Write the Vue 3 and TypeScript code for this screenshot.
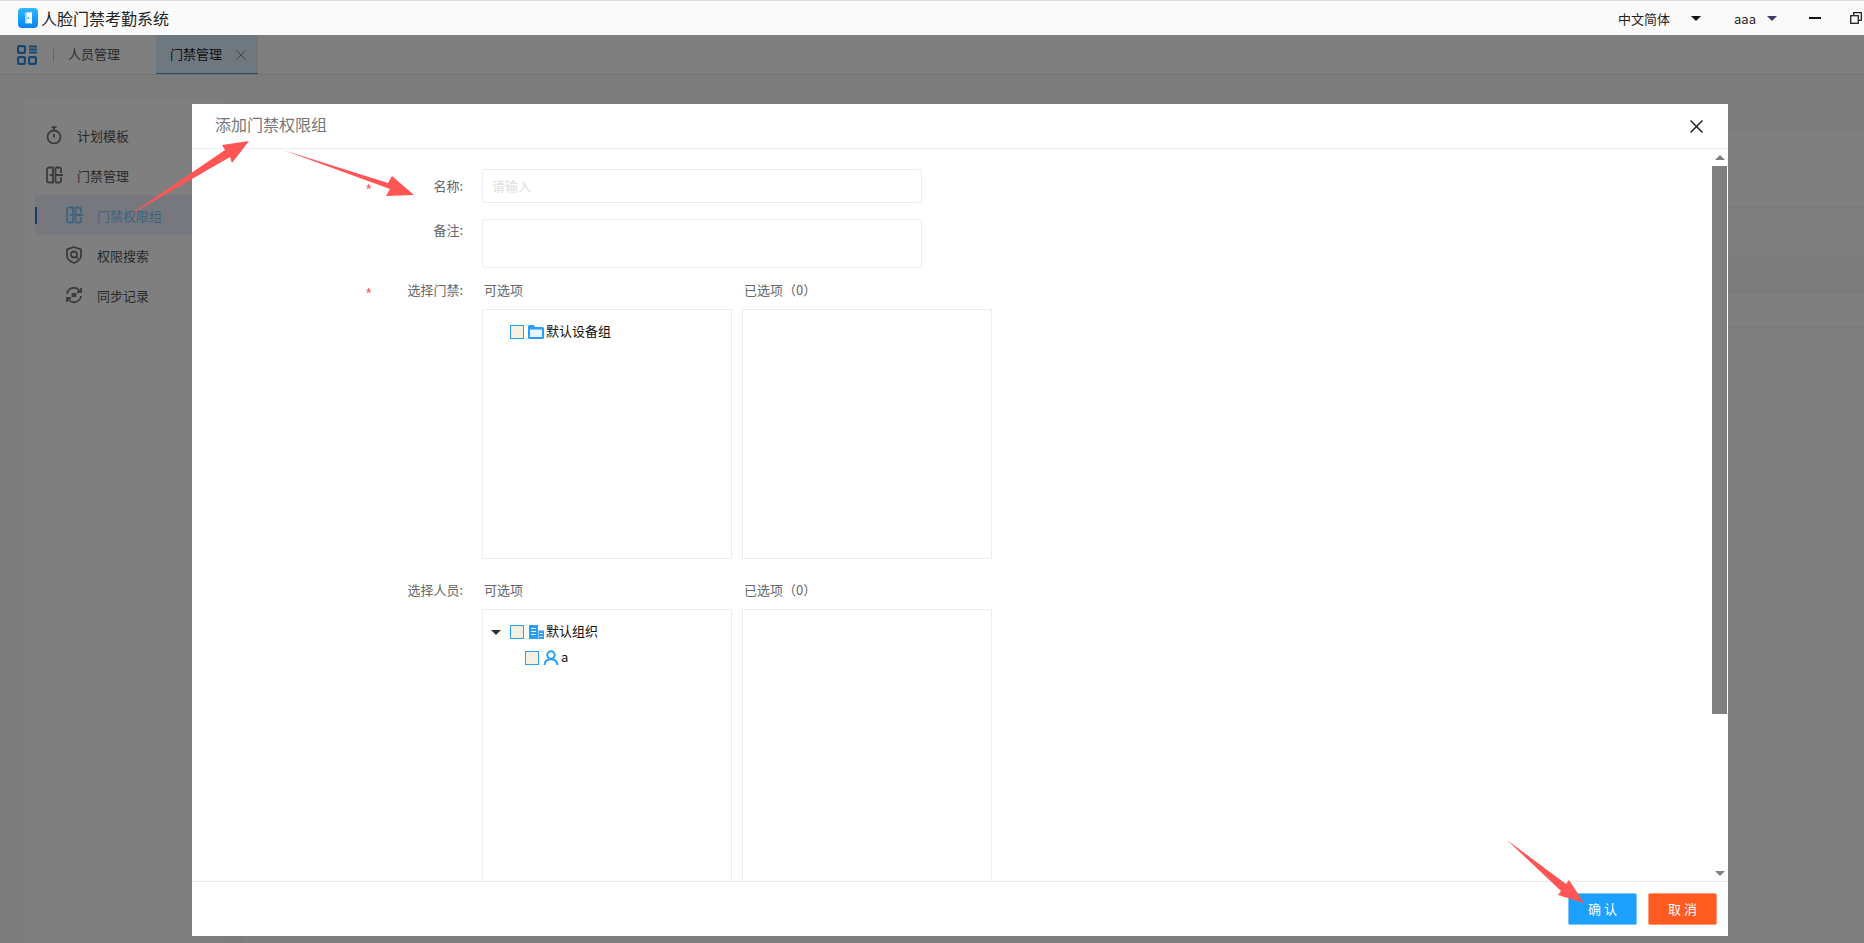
<template>
  <div class="app">
    <header class="titlebar">
      <div class="brand">
        <span class="logo">
          <svg width="20" height="20" viewBox="0 0 20 20">
            <defs>
              <linearGradient id="logo-bg" x1="0" y1="0" x2="0" y2="1">
                <stop offset="0" stop-color="#2fb8ff" />
                <stop offset="1" stop-color="#0a84f5" />
              </linearGradient>
            </defs>
            <rect width="20" height="20" rx="4" fill="url(#logo-bg)" />
            <path d="M7 4.500h7v11H7z" fill="#a9dcff" />
            <path d="M9 4.500l5 0v11l-5-1z" fill="#fff" />
            <circle cx="10.500" cy="10" r=".9" fill="#2fa4f8" />
          </svg>
        </span>
        <span class="app-name">人脸门禁考勤系统</span>
      </div>
      <div class="win-tools">
        <span class="lang">中文简体</span>
        <i class="caret"></i>
        <span class="user">aaa</span>
        <i class="caret navy"></i>
        <span class="minimize"></span>
        <svg class="restore" width="12" height="12" viewBox="0 0 12 12" fill="none" stroke="#222" stroke-width="1.300">
          <rect x=".7" y="3.700" width="7.600" height="7.600" />
          <path d="M3.700 3.500V.7h7.600v7.600H8.500" />
        </svg>
      </div>
    </header>

    <div class="page">
      <nav class="tabs">
        <svg class="grid-icon" width="20" height="20" viewBox="0 0 20 20" fill="none" stroke="#2a8fe0" stroke-width="2.200">
          <rect x="1.100" y="1.100" width="6.800" height="6.800" rx="1" />
          <path d="M12 1.500h8M12 4.500h8M12 7.500h8" />
          <rect x="1.100" y="12.100" width="6.800" height="6.800" rx="1" />
          <rect x="12.100" y="12.100" width="6.800" height="6.800" rx="1" />
        </svg>
        <span class="tab-sep"></span>
        <span class="tab">人员管理</span>
        <span class="tab active">
          门禁管理
          <svg class="tab-close" width="10" height="10" viewBox="0 0 10 10" stroke="#888" stroke-width="1">
            <path d="M.5.500l9 9M9.500.500l-9 9" />
          </svg>
        </span>
      </nav>

      <div class="workspace">
        <aside class="side">
          <div v-for="item in menu" :key="item.label" class="menu-row" :class="{ sub: item.sub, current: item.current }">
            <svg class="menu-icon" width="18" height="18" viewBox="0 0 18 18" fill="none" stroke="currentColor" stroke-width="1.800">
              <path v-for="d in item.icon" :key="d" :d="d" />
            </svg>
            <span class="menu-text">{{ item.label }}</span>
          </div>
        </aside>
        <section class="main-bg">
          <div class="bg-head"></div>
          <div class="bg-tools"></div>
          <div class="bg-thead"></div>
          <div class="bg-row"></div>
        </section>
      </div>
    </div>

    <div class="mask">
      <div class="dialog">
        <div class="dialog-head">
          <span class="dialog-title">添加门禁权限组</span>
          <svg class="dialog-close" width="13" height="13" viewBox="0 0 13 13" stroke="#222" stroke-width="1.500">
            <path d="M.5.500l12 12M12.500.500l-12 12" />
          </svg>
        </div>

        <div class="dialog-body">
          <div class="form">
            <div class="field name-field">
              <label class="label required">名称:</label>
              <div class="fake-input"><span class="placeholder">请输入</span></div>
            </div>
            <div class="field note-field">
              <label class="label">备注:</label>
              <div class="fake-textarea"></div>
            </div>
            <div class="field transfer-field">
              <label class="label required">选择门禁:</label>
              <div class="transfer">
                <div class="pane">
                  <div class="pane-title">可选项</div>
                  <div class="pane-box tree">
                    <div class="node">
                      <span class="node-arrow"></span>
                      <i class="check"></i>
                      <svg class="node-icon" width="16" height="16" viewBox="0 0 16 16">
                        <path d="M0 2.500A1.500 1.500 0 0 1 1.500 1h4.300l1.500 2h7.200A1.500 1.500 0 0 1 16 4.500v9a1.500 1.500 0 0 1-1.500 1.500h-13A1.500 1.500 0 0 1 0 13.500z" fill="#2a9df4" />
                        <rect x="2" y="5.500" width="12" height="7.500" fill="#eaf4fd" />
                      </svg>
                      <span>默认设备组</span>
                    </div>
                  </div>
                </div>
                <div class="pane">
                  <div class="pane-title">已选项（0）</div>
                  <div class="pane-box"></div>
                </div>
              </div>
            </div>
            <div class="field transfer-field last">
              <label class="label">选择人员:</label>
              <div class="transfer">
                <div class="pane">
                  <div class="pane-title">可选项</div>
                  <div class="pane-box tree tall">
                    <div class="node">
                      <span class="node-arrow open"></span>
                      <i class="check"></i>
                      <svg class="node-icon" width="16" height="16" viewBox="0 0 16 16">
                        <path d="M1 1h9v14H1z" fill="#2a9df4" />
                        <path d="M10.500 6.500H16V15h-5.500z" fill="#2a9df4" />
                        <path d="M3 4.500h5M3 7.500h5M3 10.500h5M12 9.500h2.500M12 12.500h2.500" stroke="#e4f2fd" stroke-width="1.200" />
                      </svg>
                      <span>默认组织</span>
                    </div>
                    <div class="node child">
                      <i class="check"></i>
                      <svg class="node-icon" width="16" height="16" viewBox="0 0 16 16" fill="none" stroke="#2a9df4" stroke-width="2">
                        <circle cx="8" cy="5" r="3.700" />
                        <path d="M1.500 15c.3-3.800 3-5.800 6.500-5.800s6.200 2 6.500 5.800" />
                      </svg>
                      <span>a</span>
                    </div>
                  </div>
                </div>
                <div class="pane">
                  <div class="pane-title">已选项（0）</div>
                  <div class="pane-box tall"></div>
                </div>
              </div>
            </div>
          </div>
          <div class="scrollbar">
            <i class="sb-up"></i>
            <div class="sb-track"><div class="sb-thumb"></div></div>
            <i class="sb-down"></i>
          </div>
        </div>

        <div class="dialog-foot">
          <button class="btn primary">确 认</button>
          <button class="btn danger">取 消</button>
        </div>
      </div>
    </div>

    <svg class="marks" width="1864" height="943" viewBox="0 0 1864 943">
      <polygon v-for="p in arrows" :key="p" :points="p" fill="#ff5555" />
    </svg>
  </div>
</template>

<script setup lang="ts">
interface MenuItem {
  label: string;
  icon: string[];
  sub?: boolean;
  current?: boolean;
}

const doorIcon = [
  'M8 1.500H4a2 2 0 0 0-2 2v11a2 2 0 0 0 2 2h4z',
  'M10.500 1.500H14a2 2 0 0 1 2 2v3.500M10.500 16.500H14a2 2 0 0 0 2-2V11M10.500 1.500v15M10.500 9H18',
  'M4.500 9H8',
];

const menu: MenuItem[] = [
  {
    label: '计划模板',
    icon: ['M9 4.500a6.500 6.500 0 1 0 0 13 6.500 6.500 0 0 0 0-13z', 'M6.500 1.200h5M9 1.500v3M9 8v3.500'],
  },
  { label: '门禁管理', icon: doorIcon },
  { label: '门禁权限组', icon: doorIcon, sub: true, current: true },
  {
    label: '权限搜索',
    icon: [
      'M9 1l7 2.500v6c0 3.500-3 6-7 7.500-4-1.500-7-4-7-7.500v-6z',
      'M9 5.500a3 3 0 1 0 0 6 3 3 0 0 0 0-6zM11.200 10.800l2 2',
    ],
    sub: true,
  },
  {
    label: '同步记录',
    icon: [
      'M2 8a7 7 0 0 1 12-4l2 2M16 10a7 7 0 0 1-12 4l-2-2',
      'M16 2v4h-4M2 16v-4h4',
      'M7.500 8h3v2h-3z',
    ],
    sub: true,
  },
];

const arrows = [
  '128,216 225,150 222,145 249,141 232,163 230,157',
  '283,150 388,183 392,176 414,195 386,196 390,189',
  '1507,840 1566,884 1569,880 1584,903 1558,895 1561,891',
];
</script>

<style>
html,
body {
  margin: 0;
  height: 100%;
  overflow: hidden;
}
</style>

<style scoped>
.app {
  position: relative;
  width: 1864px;
  height: 943px;
  overflow: hidden;
  font-family: "Noto Sans CJK SC", "Noto Sans", sans-serif;
  font-size: 13px;
  color: #333;
  background: #f8f8f8;
}

.titlebar {
  position: relative;
  z-index: 5;
  height: 34px;
  border-top: 1px solid #ddd;
  display: flex;
  align-items: center;
  justify-content: space-between;
  background: #fafafa;
}
.brand { display: flex; align-items: center; padding-left: 18px; }
.logo { display: flex; margin-right: 3px; }
.app-name { font-size: 16px; color: #222; }
.win-tools { display: flex; align-items: center; color: #222; font-size: 13px; }
.lang { margin-right: 21px; }
.caret {
  width: 0;
  height: 0;
  border-left: 5px solid transparent;
  border-right: 5px solid transparent;
  border-top: 5px solid #111;
}
.caret.navy { border-top-color: #3c3c6e; }
.user { margin: 0 11px 0 33px; }
.minimize { width: 12px; height: 2px; background: #111; margin: 0 29px 0 32px; }
.restore { margin-right: 2px; }

.page { height: 908px; display: flex; flex-direction: column; }
.tabs {
  height: 39px;
  flex: none;
  box-sizing: content-box;
  display: flex;
  align-items: center;
  background: #fff;
  border-bottom: 1px solid #e4e4e4;
  padding-left: 17px;
}
.tab-sep { width: 1px; height: 14px; background: #ccc; margin: 0 14px 0 16px; }
.tab { color: #555; padding-bottom: 2px; }
.tab.active {
  margin-left: 36px;
  height: 39px;
  width: 102px;
  padding: 0 0 2px 14px;
  display: flex;
  align-items: center;
  color: #222;
  background: #e0f0ff;
  border-bottom: 1px solid #3f9fe0;
  box-sizing: border-box;
}
.tab-close { margin-left: 14px; margin-top: 3px; }

.workspace { flex: 1; display: flex; padding: 23px 0 0 25px; min-height: 0; }
.side { width: 200px; flex: none; background: #fff; padding-top: 17px; }
.menu-row {
  position: relative;
  height: 40px;
  display: flex;
  align-items: center;
  gap: 14px;
  padding-left: 20px;
  color: #777;
}
.menu-text { color: #555; }
.menu-row.sub { padding-left: 40px; }
.menu-row.current { margin-left: 10px; padding-left: 30px; background: #ecf0fa; color: #78c8ff; }
.menu-row.current .menu-text { color: #78c8ff; }
.menu-row.current::before {
  content: "";
  position: absolute;
  left: 0;
  top: 12px;
  width: 2px;
  height: 17px;
  background: #3f6fe8;
}
.menu-icon { flex: none; }

.main-bg { flex: 1; margin-top: 33px; background: #fff; margin-left: 18px; }
.bg-head { height: 76px; border-bottom: 1px solid #f4f4f4; }
.bg-tools { height: 49px; }
.bg-thead { height: 35px; background: #f8f8f8; border-bottom: 1px solid #f0f0f0; }
.bg-row { height: 34px; border-bottom: 1px solid #f4f4f4; }

.mask {
  position: absolute;
  z-index: 3;
  left: 0;
  right: 0;
  top: 35px;
  bottom: 0;
  background: rgba(0, 0, 0, 0.5);
}
.dialog {
  position: absolute;
  left: 192px;
  top: 69px;
  width: 1536px;
  height: 832px;
  background: #fff;
  display: flex;
  flex-direction: column;
}
.dialog-head {
  flex: none;
  display: flex;
  align-items: center;
  justify-content: space-between;
  padding: 0 25px 4px 23px;
  height: 40px;
  border-bottom: 1px solid #e8edf5;
}
.dialog-title { font-size: 16px; color: #777; }
.dialog-close { margin-top: 4px; }

.dialog-body { flex: 1; min-height: 0; display: flex; overflow: hidden; }
.form { flex: 1; min-width: 0; padding: 20px 0 0; overflow: hidden; }
.field { display: flex; }
.label {
  position: relative;
  width: 271px;
  margin-right: 19px;
  flex: none;
  text-align: right;
  color: #666;
  line-height: 20px;
}
.label.required::before {
  content: "*";
  position: absolute;
  left: 174px;
  top: 3px;
  color: #f44;
  font-family: "Liberation Sans", sans-serif;
  font-size: 14px;
}
.name-field { height: 50px; }
.name-field .label { line-height: 34px; }
.name-field .label.required::before { top: 10px; line-height: 20px; }
.note-field { height: 64px; }
.note-field .label { margin-top: 1px; }
.fake-input,
.fake-textarea {
  width: 440px;
  box-sizing: border-box;
  border: 1px solid #ebedf3;
  border-radius: 3px;
  background: #fff;
}
.fake-input { height: 34px; padding-left: 9px; line-height: 32px; }
.fake-textarea { height: 49px; }
.placeholder { color: #ddd; font-size: 13px; }

.transfer-field { margin-top: -3px; }
.transfer-field.last { margin-top: -5px; }
.transfer { display: flex; gap: 10px; }
.pane { width: 250px; }
.pane-title { height: 29px; padding-left: 2px; line-height: 20px; color: #666; }
.pane-box {
  height: 250px;
  box-sizing: border-box;
  border: 1px solid #ebedf3;
  margin-bottom: 26px;
}
.pane-box.tall { height: 300px; margin-bottom: 0; }
.tree { padding-top: 7px; color: #111; }
.node { height: 26px; display: flex; align-items: center; padding-left: 8px; }
.node.child { padding-left: 41px; }
.node-arrow { width: 11px; margin-right: 7px; margin-top: 4px; height: 0; flex: none; }
.node-arrow.open {
  width: 0;
  margin-right: 8px;
  border-left: 5px solid transparent;
  border-right: 5px solid transparent;
  border-top: 5px solid #333;
}
.check {
  width: 14px;
  height: 14px;
  box-sizing: border-box;
  flex: none;
  margin: 4px 4px 0 1px;
  border: 1px solid #2a9df4;
  background: #f5f0e1;
}
.node-icon { flex: none; margin: 3px 2px 0 0; }

.scrollbar { width: 16px; flex: none; display: flex; flex-direction: column; align-items: center; }
.sb-up, .sb-down {
  width: 0;
  height: 0;
  flex: none;
  border-left: 5px solid transparent;
  border-right: 5px solid transparent;
}
.sb-up { border-bottom: 5px solid #808080; margin: 6px 0 6px; }
.sb-down { border-top: 5px solid #808080; margin: 6px 0 5px; }
.sb-track { flex: 1; width: 100%; }
.sb-thumb { width: 15px; height: 548px; background: #808080; }

.dialog-foot {
  height: 55px;
  flex: none;
  box-sizing: border-box;
  border-top: 1px solid #ececec;
  display: flex;
  justify-content: flex-end;
  align-items: flex-start;
  gap: 11px;
  padding: 11px 11px 0 0;
}
.btn {
  width: 69px;
  height: 32px;
  border: 1px solid transparent;
  border-radius: 2px;
  color: #fff;
  font-family: inherit;
  font-size: 13px;
  padding: 0 0 2px;
}
.btn.primary { background: #1ea0ff; border-color: #7cc5fb; }
.btn.danger { background: #ff5a1f; border-color: #ff9a75; }

.marks { position: absolute; left: 0; top: 0; z-index: 9; pointer-events: none; }
</style>
